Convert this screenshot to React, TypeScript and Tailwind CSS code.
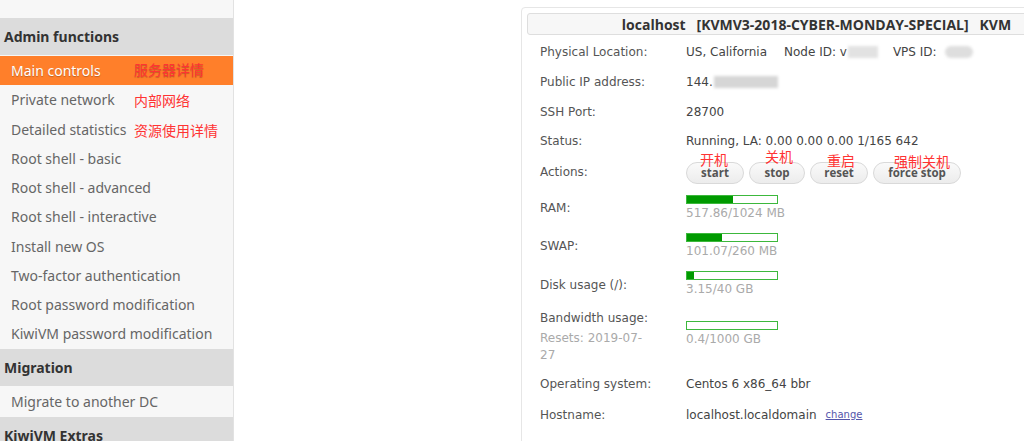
import React from "react";

const sideFont = { fontFamily: '"Noto Sans", "Noto Sans CJK SC", sans-serif' };
const cnFont = { fontFamily: '"Noto Sans CJK SC", sans-serif' };

function SideHeader({ children }: { children: React.ReactNode }) {
  return (
    <div className="h-[37px] flex items-center pl-[4px] bg-[#dcdcdc] text-[14px] font-bold text-[#333]">
      {children}
    </div>
  );
}

function SideItem({ label, active, note, noteTop }: { label: string; active?: boolean; note?: string; noteTop?: string }) {
  return (
    <div
      className={
        "relative h-[29.25px] flex items-center pl-[11px] text-[14px] " +
        (active ? "bg-[#ff7f2a] text-white [text-shadow:0_1px_1px_rgba(0,0,0,0.25)]" : "text-[#666]")
      }
    >
      {label}
      {note && (
        <span
          className={"absolute left-[134px] text-[14px] leading-none text-[#ff3333] " + (noteTop || "top-[6px]")}
          style={cnFont}
        >
          {note}
        </span>
      )}
    </div>
  );
}

function Bar({ pct, text }: { pct: number; text: string }) {
  return (
    <div className="flex flex-col">
      <div className="w-[92px] h-[9px] border border-[#3cb83c] bg-white">
        <div className="h-full bg-[#009a00]" style={{ width: `${pct}%` }} />
      </div>
      <div className="text-[#aaa] leading-[17px] mt-[1px]">{text}</div>
    </div>
  );
}

function Row({ h, label, children }: { h: string; label: React.ReactNode; children?: React.ReactNode }) {
  return (
    <div className={"flex items-center " + h}>
      <div className="w-[146px] shrink-0 text-[#555]">{label}</div>
      <div className="text-[#444] flex items-center">{children}</div>
    </div>
  );
}

function Btn({ w, label, note, noteCls }: { w: string; label: string; note: string; noteCls: string }) {
  return (
    <div className="relative">
      <div
        className={
          "h-[22px] rounded-full border border-[#d9d9d9] bg-gradient-to-b from-[#fafafa] to-[#ececec] flex items-center justify-center text-[11.5px] font-bold text-[#555] " +
          w
        }
        style={{ fontFamily: '"Open Sans", sans-serif' }}
      >
        {label}
      </div>
      <span
        className={"absolute text-[14px] leading-none text-[#ff3333] whitespace-nowrap " + noteCls}
        style={cnFont}
      >
        {note}
      </span>
    </div>
  );
}

export default function App() {
  return (
    <div className="w-[1024px] h-[441px] overflow-hidden bg-white flex">
      <div className="w-[234px] shrink-0 h-full bg-[#f7f7f7] border-r border-[#e2e2e2]" style={sideFont}>
        <div className="h-[18px]" />
        <SideHeader>Admin functions</SideHeader>
        <div className="h-[1px]" />
        <SideItem label="Main controls" active note="服务器详情" />
        <SideItem label="Private network" note="内部网络" noteTop="top-[8px]" />
        <SideItem label="Detailed statistics" note="资源使用详情" noteTop="top-[8px]" />
        <SideItem label="Root shell - basic" />
        <SideItem label="Root shell - advanced" />
        <SideItem label="Root shell - interactive" />
        <SideItem label="Install new OS" />
        <SideItem label="Two-factor authentication" />
        <SideItem label="Root password modification" />
        <SideItem label="KiwiVM password modification" />
        <SideHeader>Migration</SideHeader>
        <div className="h-[1px]" />
        <SideItem label="Migrate to another DC" />
        <div className="h-[1px]" />
        <SideHeader>KiwiVM Extras</SideHeader>
      </div>

      <div className="flex-1 relative">
        <div
          className="absolute left-[287px] top-[7px] w-[591px] h-[460px] border border-[#e6e6e6] rounded-[4px] px-[5px] pt-[5px] bg-white"
          style={{ fontFamily: '"DejaVu Sans", Verdana, sans-serif' }}
        >
          <div
            className="h-[22px] border border-[#dedede] rounded-[3px] bg-[#f7f7f7] flex items-center justify-center text-[14px] font-bold text-[#333] whitespace-pre"
            style={{ fontFamily: '"Open Sans", sans-serif' }}
          >
            {"localhost   [KVMV3-2018-CYBER-MONDAY-SPECIAL]   KVM"}
          </div>
          <div className="pl-[13px] text-[12px]">
            <div className="h-[2px]" />
            <Row h="h-[30px]" label="Physical Location:">
              <span>US, California</span>
              <span className="ml-[17px]">Node ID: v</span>
              <span className="inline-block w-[30px] h-[12px] bg-[#e2e2e2] blur-[1.5px] ml-[1px]" />
              <span className="ml-[15px]">VPS ID:</span>
              <span className="inline-block w-[28px] h-[12px] rounded-full bg-[#dedede] blur-[1.5px] ml-[8px]" />
            </Row>
            <Row h="h-[30px]" label="Public IP address:">
              <span>144.</span>
              <span className="inline-block w-[64px] h-[12px] bg-[#d6d6d6] blur-[1.5px] ml-[1px]" />
            </Row>
            <Row h="h-[29px]" label="SSH Port:">
              <span>28700</span>
            </Row>
            <Row h="h-[30px]" label="Status:">
              <span>Running, LA: 0.00 0.00 0.00 1/165 642</span>
            </Row>
            <Row h="h-[32px]" label="Actions:">
              <div className="flex gap-[5px] pt-[1px]">
                <Btn w="w-[58px]" label="start" note="开机" noteCls="left-[14px] top-[-10px]" />
                <Btn w="w-[56px]" label="stop" note="关机" noteCls="left-[16px] top-[-13px]" />
                <Btn w="w-[58px]" label="reset" note="重启" noteCls="left-[17px] top-[-9px]" />
                <Btn w="w-[88px]" label="force stop" note="强制关机" noteCls="left-[21px] top-[-8px]" />
              </div>
            </Row>
            <Row h="h-[40px]" label="RAM:">
              <Bar pct={50.6} text="517.86/1024 MB" />
            </Row>
            <Row h="h-[36px]" label="SWAP:">
              <Bar pct={39} text="101.07/260 MB" />
            </Row>
            <Row h="h-[41px]" label="Disk usage (/):">
              <Bar pct={8} text="3.15/40 GB" />
            </Row>
            <div className="flex items-center h-[64px]">
              <div className="w-[146px] shrink-0 text-[#555] pr-[35px]">
                <div className="leading-[17px]">Bandwidth usage:</div>
                <div className="leading-[17px] text-[#aaa] mt-[3px]">Resets: 2019-07-27</div>
              </div>
              <div className="mb-[5px]">
                <Bar pct={0} text="0.4/1000 GB" />
              </div>
            </div>
            <Row h="h-[30px]" label="Operating system:">
              <span>Centos 6 x86_64 bbr</span>
            </Row>
            <Row h="h-[31px]" label="Hostname:">
              <span>localhost.localdomain</span>
              <span className="ml-[9px] text-[10px] text-[#5555aa] underline">change</span>
            </Row>
          </div>
        </div>
      </div>
    </div>
  );
}
